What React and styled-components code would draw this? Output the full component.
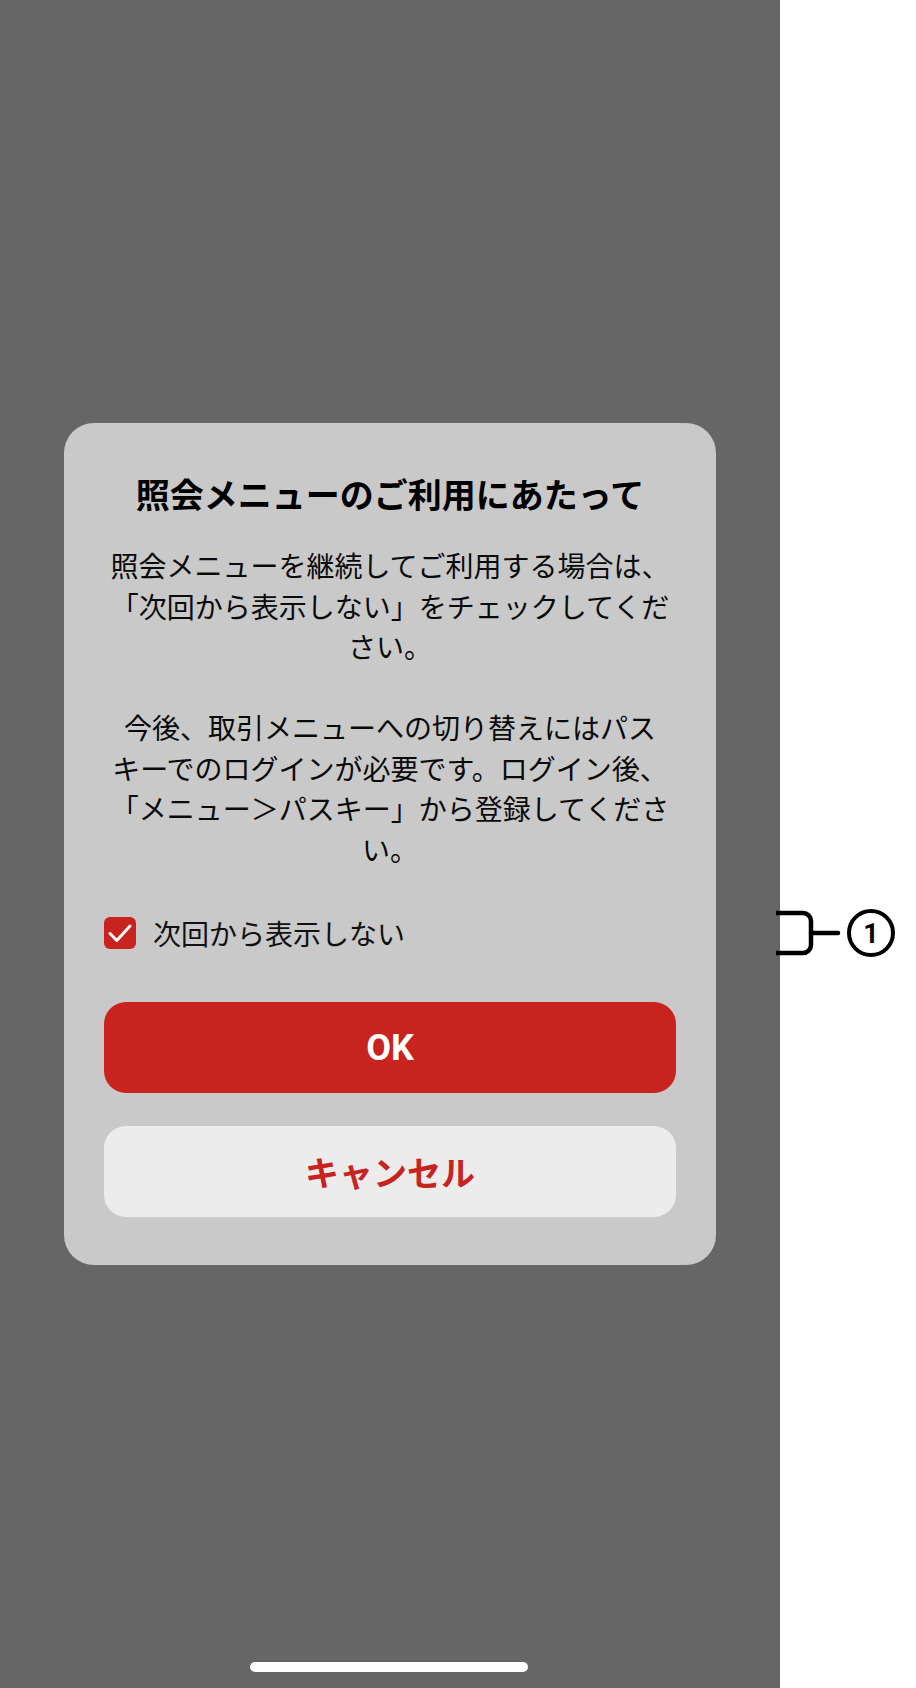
import React from "react";
import styled, { createGlobalStyle } from "styled-components";

const GlobalStyle = createGlobalStyle`
  html, body {
    margin: 0;
    padding: 0;
    background: #ffffff;
  }
  body {
    font-family: "Noto Sans CJK JP", "Noto Sans", sans-serif;
    -webkit-font-smoothing: antialiased;
  }
  * { box-sizing: border-box; }
`;

const Page = styled.div`
  position: relative;
  display: flex;
  width: 916px;
  height: 1688px;
  background: #ffffff;
`;

const Screen = styled.div`
  position: relative;
  width: 780px;
  height: 100%;
  background: #666666;
  display: flex;
  align-items: center;
  justify-content: center;
`;

const Side = styled.div`
  flex: 1;
  background: #ffffff;
`;

const Dialog = styled.div`
  width: 652px;
  background: #c9c9c9;
  border-radius: 30px;
  padding: 51px 40px 48px;
  display: flex;
  flex-direction: column;
`;

const Title = styled.h2`
  margin: 0;
  font-family: "Noto Sans CJK JP", sans-serif;
  font-size: 34px;
  line-height: 40px;
  font-weight: 700;
  color: #000;
  text-align: center;
  white-space: nowrap;
`;

const Body = styled.div`
  margin-top: 31.5px;
  display: flex;
  flex-direction: column;
  gap: 40.5px;
`;

const Paragraph = styled.p`
  margin: 0;
  font-family: "Noto Sans CJK JP", sans-serif;
  font-size: 28px;
  line-height: 40.5px;
  color: #0a0a0a;
  text-align: center;
  line-break: strict;
  text-spacing-trim: space-all;
`;

const Keep = styled.span`
  white-space: nowrap;
`;

const CheckRow = styled.label`
  margin-top: 48px;
  display: flex;
  align-items: center;
  gap: 17px;
  height: 32px;
`;

const CheckBox = styled.span`
  width: 32px;
  height: 32px;
  border-radius: 6px;
  background: #c8231f;
  display: flex;
  align-items: center;
  justify-content: center;
  flex-shrink: 0;
`;

const CheckLabel = styled.span`
  font-family: "Noto Sans CJK JP", sans-serif;
  font-size: 28px;
  line-height: 32px;
  color: #111;
`;

const Button = styled.button`
  width: 100%;
  height: 91px;
  border: none;
  border-radius: 22px;
  margin-top: ${(p) => (p.$primary ? "53px" : "33px")};
  background: ${(p) => (p.$primary ? "#c8231f" : "#ececec")};
  color: ${(p) => (p.$primary ? "#ffffff" : "#c8231f")};
  font-family: "Roboto", "Noto Sans CJK JP", sans-serif;
  font-size: ${(p) => (p.$primary ? "36px" : "34px")};
  font-weight: 700;
  display: flex;
  align-items: center;
  justify-content: center;
  padding: 0;
  cursor: pointer;
`;

const HomeBar = styled.div`
  position: absolute;
  left: 250px;
  bottom: 16px;
  width: 278px;
  height: 10px;
  border-radius: 5px;
  background: #ffffff;
`;

const Callout = styled.svg`
  position: absolute;
  left: 776px;
  top: 907px;
  overflow: visible;
`;

export default function App() {
  return (
    <>
      <GlobalStyle />
      <Page lang="ja">
        <Screen>
          <Dialog>
            <Title>照会メニューのご利用にあたって</Title>
            <Body>
              <Paragraph lang="ja">
                照会メニューを継続してご利用する場合は、<Keep>「次</Keep>回から表示しない」をチェックしてください。
              </Paragraph>
              <Paragraph lang="ja">
                今後、取引メニューへの切り替えにはパス<Keep>キー</Keep>でのログインが必要です。ログイン後、<Keep>「メ</Keep>ニュー＞パスキー」から登録してください。
              </Paragraph>
            </Body>
            <CheckRow>
              <CheckBox>
                <svg width="32" height="32" viewBox="0 0 32 32">
                  <path
                    d="M6 16.5 L12.8 23.5 L26 9"
                    fill="none"
                    stroke="#ffffff"
                    strokeWidth="3"
                    strokeLinecap="round"
                    strokeLinejoin="round"
                  />
                </svg>
              </CheckBox>
              <CheckLabel>次回から表示しない</CheckLabel>
            </CheckRow>
            <Button $primary>OK</Button>
            <Button>キャンセル</Button>
          </Dialog>
          <HomeBar />
        </Screen>
        <Side />
        <Callout width="124" height="52" viewBox="0 0 124 52">
          <path
            d="M0 6 H27 A8 8 0 0 1 35 14 V38 A8 8 0 0 1 27 46 H0"
            fill="none"
            stroke="#000"
            strokeWidth="4.5"
          />
          <path d="M35 26 H62" stroke="#000" strokeWidth="4.5" strokeLinecap="round" />
          <circle cx="95" cy="26" r="22" fill="#fff" stroke="#000" strokeWidth="4" />
          <text
            x="95"
            y="27"
            textAnchor="middle"
            dominantBaseline="central"
            fontFamily="Roboto, sans-serif"
            fontSize="27"
            fontWeight="700"
            fill="#000"
          >
            1
          </text>
        </Callout>
      </Page>
    </>
  );
}
